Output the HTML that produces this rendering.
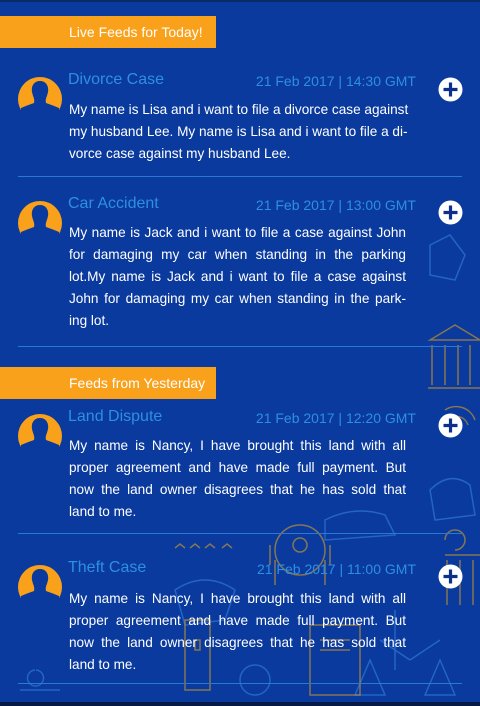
<!DOCTYPE html>
<html><head><meta charset="utf-8"><style>
*{margin:0;padding:0;box-sizing:border-box}
body{width:480px;height:706px;background:#0a3a9e;position:relative;overflow:hidden;font-family:"Liberation Sans",sans-serif}
.top{position:absolute;left:0;top:0;width:480px;height:2px;background:#0c2a66}
.bot{position:absolute;left:0;top:702px;width:480px;height:4px;background:#061a45}
.ban{position:absolute;left:0;width:216px;height:32px;background:#f9a11b;color:#fff;font-size:14px;line-height:32px;padding-left:69px}
.t{position:absolute;left:68px;font-size:16px;color:#2d8fe3}
.d{position:absolute;right:64px;font-size:14px;color:#2d8fe3}
.b{position:absolute;left:69px;width:337px;color:#fff;font-size:13.6px;line-height:22px}
.b div{text-align:justify;text-align-last:justify;white-space:nowrap;overflow:visible}
.b div.l{text-align-last:left}
.hr{position:absolute;left:18px;width:444px;height:1px;background:#2a78d6}
.av{position:absolute;left:18px;width:44px;height:36px;overflow:hidden}
.pl{position:absolute;left:438px;width:25px;height:25px}
.bg{position:absolute;left:0;top:0}
</style></head><body>
<svg class="bg" width="480" height="706" fill="none" stroke-width="1.5">
<g stroke="#2a6fd0" opacity=".8">
<path d="M430 245 l20 -10 15 20 -10 25 -25 -5z"/>
<path d="M430 490 q20 -20 40 -5 l5 30 -40 5z"/>
<path d="M325 520 q30 -15 60 -5 l10 20 -70 5z"/>
<path d="M175 590 q30 -20 60 0 l-10 30 -40 5z"/>
<path d="M380 640 l30 20 M410 660 l30 -20 M395 610 v60 M370 660 l-15 35 h30z M440 660 l-15 35 h30z"/>
<circle cx="255" cy="680" r="15"/>
<path d="M20 690 h40 M35 670 a8 8 0 1 0 1 0"/>
</g>
<g stroke="#b08a3a" opacity=".75">
<path d="M430 340 l25 -15 25 15z M432 345 v40 M445 345 v40 M458 345 v40 M470 345 v40 M428 388 h52"/>
<path d="M445 410 a20 20 0 0 1 30 10 M448 420 a12 12 0 0 1 20 5"/>
<circle cx="300" cy="550" r="25"/><circle cx="300" cy="545" r="7"/>
<path d="M275 560 v25 M325 560 v25 M270 545 v20 M330 545 v20"/>
<path d="M175 548 l5 -4 5 4 M190 548 l5 -4 5 4 M205 548 l5 -4 5 4 M222 548 l5 -4 5 4"/>
<path d="M445 540 a10 10 0 1 1 10 10 M445 555 h35 M447 560 v45 M460 560 v45 M473 560 v45"/>
<path d="M310 625 h50 v70 h-50z M320 640 h30 M320 650 h30"/>
<path d="M185 620 h25 v70 h-25z M195 640 h5 v10 h-5z"/>
</g>
</svg>
<div class="top"></div>
<div class="ban" style="top:16px">Live Feeds for Today!</div>

<svg class="av" style="top:77px" viewBox="0 0 44 36"><circle cx="22" cy="22" r="22" fill="#f9a11b"/><path d="M22 4 C16 4 13 9 14 15 C15 20 17 22 16 26 Q10 28 3 31 L3 40 L41 40 L41 31 Q34 28 28 26 C27 22 29 20 30 15 C31 9 28 4 22 4Z" fill="#0a3a9e"/></svg>
<div class="t" style="top:71px">Divorce Case</div>
<div class="d" style="top:73px">21 Feb 2017 | 14:30 GMT</div>
<svg class="pl" style="top:77px" viewBox="0 0 25 25"><circle cx="12.5" cy="12.5" r="12" fill="#fff"/><path d="M12.5 5.5v14M5.5 12.5h14" stroke="#0b2f8a" stroke-width="3.2"/></svg>
<div class="b" style="top:99px"><div>My name is Lisa and i want to file a divorce case against</div><div>my husband Lee. My name is Lisa and i want to file a di-</div><div class="l">vorce case against my husband Lee.</div></div>
<div class="hr" style="top:176px"></div>

<svg class="av" style="top:201px" viewBox="0 0 44 36"><circle cx="22" cy="22" r="22" fill="#f9a11b"/><path d="M22 4 C16 4 13 9 14 15 C15 20 17 22 16 26 Q10 28 3 31 L3 40 L41 40 L41 31 Q34 28 28 26 C27 22 29 20 30 15 C31 9 28 4 22 4Z" fill="#0a3a9e"/></svg>
<div class="t" style="top:195px">Car Accident</div>
<div class="d" style="top:197px">21 Feb 2017 | 13:00 GMT</div>
<svg class="pl" style="top:200px" viewBox="0 0 25 25"><circle cx="12.5" cy="12.5" r="12" fill="#fff"/><path d="M12.5 5.5v14M5.5 12.5h14" stroke="#0b2f8a" stroke-width="3.2"/></svg>
<div class="b" style="top:222px"><div>My name is Jack and i want to file a case against John</div><div>for damaging my car when standing in the parking</div><div>lot.My name is Jack and i want to file a case against</div><div>John for damaging my car when standing in the park-</div><div class="l">ing lot.</div></div>
<div class="hr" style="top:346px"></div>

<div class="ban" style="top:367px">Feeds from Yesterday</div>

<svg class="av" style="top:414px" viewBox="0 0 44 36"><circle cx="22" cy="22" r="22" fill="#f9a11b"/><path d="M22 4 C16 4 13 9 14 15 C15 20 17 22 16 26 Q10 28 3 31 L3 40 L41 40 L41 31 Q34 28 28 26 C27 22 29 20 30 15 C31 9 28 4 22 4Z" fill="#0a3a9e"/></svg>
<div class="t" style="top:408px">Land Dispute</div>
<div class="d" style="top:410px">21 Feb 2017 | 12:20 GMT</div>
<svg class="pl" style="top:413px" viewBox="0 0 25 25"><circle cx="12.5" cy="12.5" r="12" fill="#fff"/><path d="M12.5 5.5v14M5.5 12.5h14" stroke="#0b2f8a" stroke-width="3.2"/></svg>
<div class="b" style="top:435px"><div>My name is Nancy, I have brought this land with all</div><div>proper agreement and have made full payment. But</div><div>now the land owner disagrees that he has sold that</div><div class="l">land to me.</div></div>
<div class="hr" style="top:533px"></div>

<svg class="av" style="top:565px" viewBox="0 0 44 36"><circle cx="22" cy="22" r="22" fill="#f9a11b"/><path d="M22 4 C16 4 13 9 14 15 C15 20 17 22 16 26 Q10 28 3 31 L3 40 L41 40 L41 31 Q34 28 28 26 C27 22 29 20 30 15 C31 9 28 4 22 4Z" fill="#0a3a9e"/></svg>
<div class="t" style="top:559px">Theft Case</div>
<div class="d" style="top:561px">21 Feb 2017 | 11:00 GMT</div>
<svg class="pl" style="top:564px" viewBox="0 0 25 25"><circle cx="12.5" cy="12.5" r="12" fill="#fff"/><path d="M12.5 5.5v14M5.5 12.5h14" stroke="#0b2f8a" stroke-width="3.2"/></svg>
<div class="b" style="top:588px"><div>My name is Nancy, I have brought this land with all</div><div>proper agreement and have made full payment. But</div><div>now the land owner disagrees that he has sold that</div><div class="l">land to me.</div></div>
<div class="hr" style="top:683px"></div>
<div class="bot"></div>
</body></html>
